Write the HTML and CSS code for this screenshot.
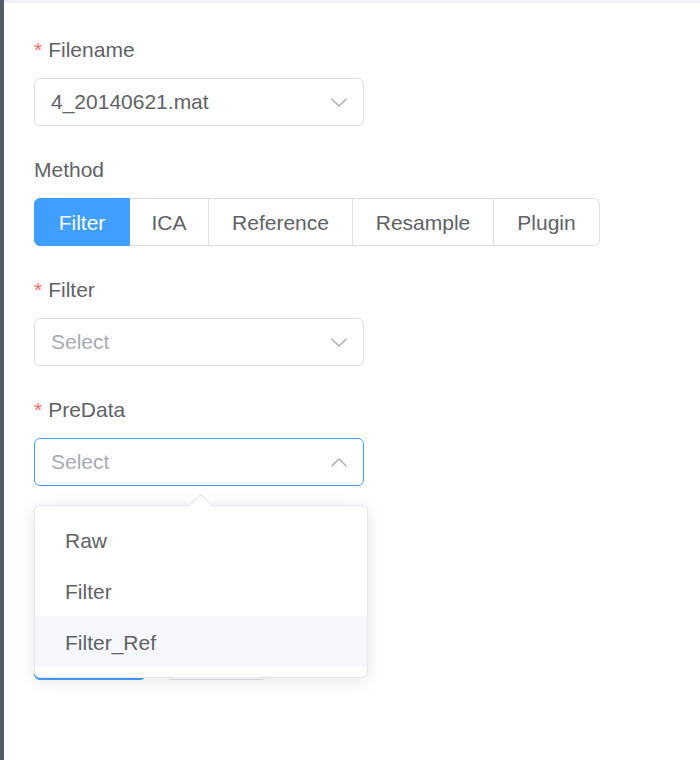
FILE: index.html
```html
<!DOCTYPE html>
<html lang="en">
<head>
<meta charset="utf-8">
<title>Preprocess</title>
<link rel="stylesheet" href="styles.css">
</head>
<body>
<div class="app">
  <div class="sidebar"></div>
  <div class="main">
    <div class="topbar"></div>
    <div class="content">
      <div class="form-item">
        <div class="label"><span class="req">*</span>Filename</div>
        <div class="select">
          <span class="value">4_20140621.mat</span>
          <svg class="chev" width="16" height="9" viewBox="0 0 16 9"><polyline points="0.5,0.8 8,8 15.5,0.8" fill="none" stroke="#a8abb2" stroke-width="1.3"/></svg>
        </div>
      </div>
      <div class="form-item">
        <div class="label">Method</div>
        <div class="radio-group">
          <div class="seg seg-filter active">Filter</div>
          <div class="seg seg-ica">ICA</div>
          <div class="seg seg-ref">Reference</div>
          <div class="seg seg-res">Resample</div>
          <div class="seg seg-plug">Plugin</div>
        </div>
      </div>
      <div class="form-item">
        <div class="label"><span class="req">*</span>Filter</div>
        <div class="select">
          <span class="placeholder">Select</span>
          <svg class="chev" width="16" height="9" viewBox="0 0 16 9"><polyline points="0.5,0.8 8,8 15.5,0.8" fill="none" stroke="#a8abb2" stroke-width="1.3"/></svg>
        </div>
      </div>
      <div class="form-item">
        <div class="label"><span class="req">*</span>PreData</div>
        <div class="select-wrap">
          <div class="select focused">
            <span class="placeholder">Select</span>
            <svg class="chev" width="16" height="9" viewBox="0 0 16 9"><polyline points="0.5,8.2 8,1 15.5,8.2" fill="none" stroke="#a8abb2" stroke-width="1.3"/></svg>
          </div>
          <div class="dropdown">
            <div class="arrow"></div>
            <ul class="options">
              <li class="option">Raw</li>
              <li class="option">Filter</li>
              <li class="option hover">Filter_Ref</li>
            </ul>
          </div>
        </div>
      </div>
      <div class="actions">
        <button class="btn btn-primary" aria-label="Submit"></button>
        <button class="btn btn-default" aria-label="Reset"></button>
      </div>
    </div>
  </div>
</div>
</body>
</html>
```

FILE: styles.css
```css
* { box-sizing: border-box; }
html, body { margin: 0; padding: 0; background: #ffffff; }
body {
  font-family: "Liberation Sans", Arial, sans-serif;
  font-size: 21px;
  color: #606266;
}
.app { display: flex; height: 760px; }
.sidebar { width: 4px; background: #545c64; flex: none; }
.main { flex: 1; display: flex; flex-direction: column; }
.topbar { height: 3px; background: #eef2f7; }
.content { padding: 31px 30px 0 30px; }

.form-item { margin-bottom: 28px; }
.label {
  font-size: 21px;
  line-height: 30px;
  height: 30px;
  padding-top: 1px;
  margin-bottom: 14px;
  color: #606266;
}
.req { color: #f56c6c; margin-right: 6px; }

.select-wrap { position: relative; width: 330px; }
.select {
  width: 330px;
  height: 48px;
  border: 1px solid #dcdfe6;
  border-radius: 6px;
  display: flex;
  align-items: center;
  padding: 0 16px;
  font-size: 21px;
  color: #606266;
  background: #fff;
}
.select.focused { border-color: #409eff; }
.placeholder { color: #a8abb2; }
.chev { margin-left: auto; display: block; }

.radio-group { display: flex; height: 48px; }
.seg {
  height: 48px;
  display: flex;
  align-items: center;
  justify-content: center;
  padding-top: 1px;
  border: 1px solid #dcdfe6;
  border-left: none;
  color: #606266;
  font-size: 21px;
  background: #fff;
}
.seg:first-child { border-left: 1px solid #dcdfe6; border-radius: 6px 0 0 6px; }
.seg:last-child { border-radius: 0 6px 6px 0; }
.seg.active { background: #409eff; border-color: #409eff; color: #fff; }
.seg-filter { width: 96px; }
.seg-ica { width: 79px; }
.seg-ref { width: 144px; }
.seg-res { width: 141px; }
.seg-plug { width: 106px; }

.dropdown {
  position: absolute;
  top: 67px;
  left: 0;
  width: 334px;
  background: #fff;
  border: 1px solid #e4e7ed;
  border-radius: 6px;
  box-shadow: 0 3px 18px rgba(0, 0, 0, 0.1);
  z-index: 10;
}
.arrow {
  position: absolute;
  top: -8.8px;
  left: 158px;
  width: 15.6px;
  height: 15.6px;
  background: #fff;
  border-top: 1px solid #e4e7ed;
  border-left: 1px solid #e4e7ed;
  transform: rotate(45deg);
}
.options { list-style: none; margin: 0; padding: 8px 0 10px 0; position: relative; }
.option {
  height: 51px;
  line-height: 51px;
  padding: 1px 30px 0 30px;
  font-size: 21px;
  color: #606266;
}
.option.hover { background: #f5f7fa; }

.actions { display: flex; gap: 20px; margin-top: 146px; }
.btn {
  height: 48px;
  border-radius: 6px;
  font-family: "Liberation Sans", Arial, sans-serif;
  font-size: 21px;
  padding: 0;
}
.btn-primary { width: 112px; background: #409eff; border: 1px solid #409eff; color: #fff; }
.btn-default { width: 101px; background: #fff; border: 1px solid #dcdfe6; color: #606266; }
```
